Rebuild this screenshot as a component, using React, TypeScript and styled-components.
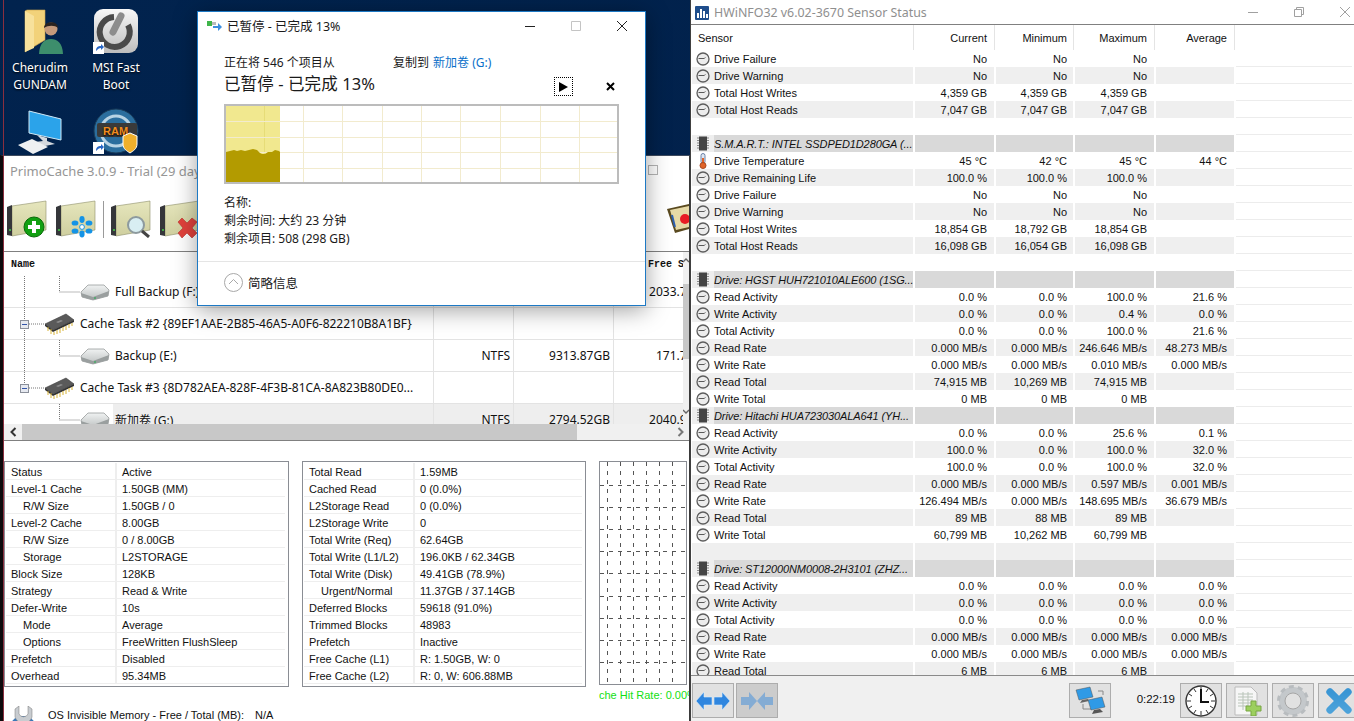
import React from "react";
import styled, { createGlobalStyle } from "styled-components";

const UI = `"Noto Sans", "Noto Sans CJK SC", sans-serif`;
const TAB = `"Liberation Sans", "Noto Sans CJK SC", sans-serif`;

const Global = createGlobalStyle`
  html, body { margin: 0; padding: 0; overflow: hidden; background: #02204a; }
  * { box-sizing: border-box; }
`;

const Desktop = styled.div`
  position: relative; width: 1354px; height: 721px; overflow: hidden;
  font-family: ${UI}; font-size: 11px; color: #111;
  background: linear-gradient(160deg, #01234e 0%, #02204a 60%, #041a3c 100%);
`;
const Seam = styled.div`
  position: absolute; left: 3px; top: 0; width: 1px; height: 721px; background: #8a2f3f; z-index: 5;
`;

/* ---------- desktop icons ---------- */
const IconGrid = styled.div`
  position: absolute; left: 2px; top: 8px;
  display: grid; grid-template-columns: 76px 76px; grid-auto-rows: 100px;
`;
const DeskIcon = styled.div`
  display: flex; flex-direction: column; align-items: center; text-align: center;
  color: #fff; font-size: 12px; line-height: 17px; text-shadow: 0 1px 2px #000;
  svg { display: block; margin-bottom: 5px; }
`;

/* ---------- primo window ---------- */
const Primo = styled.div`
  position: absolute; left: 0; top: 155px; width: 690px; height: 566px; overflow: hidden;
  background: #fff; border-left: 4px solid #0d0a0c; border-right: 1px solid #3a3a3a;
  border-top: 1px solid #3e4a5e; display: flex; flex-direction: column;
`;
const PrimoTitle = styled.div`
  height: 29px; flex: none; padding: 6px 0 0 6px; color: #969696; font-size: 13px; line-height: 18px;
  display: flex; align-items: flex-start; justify-content: space-between; white-space: nowrap;
`;
const GhostMax = styled.span`
  width: 10px; height: 10px; border: 1px solid #b5b5b5; margin: 3px 31px 0 0;
`;
const Toolbar = styled.div`
  height: 66px; flex: none; display: flex; align-items: flex-start; padding: 15px 0 0 3px; gap: 9px;
`;
const ToolSep = styled.span`
  width: 1px; height: 37px; background: #9a9a9a; margin: 1px -2px 0;
`;
const ToolEnd = styled.span`
  margin-left: auto; margin-top: 3px; display: flex;
`;
const List = styled.div`
  flex: none; height: 190px; border-top: 1px solid #808080; border-bottom: 1px solid #808080;
  display: grid; grid-template-columns: 679px 6px; grid-template-rows: 172px 16px;
`;
const ListBody = styled.div`
  overflow: hidden; grid-column: 1; grid-row: 1;
`;
const ListHead = styled.div`
  height: 24px; display: grid; grid-template-columns: 430px 80px 100px 100px; align-items: center; width: 710px; padding-top: 1px;
  font-family: "Liberation Mono", monospace; font-size: 10px; font-weight: 700; color: #111;
`;
const HeadName = styled.span` padding-left: 7px; `;
const HeadFree = styled.span` padding-left: 34px; grid-column: 4; `;
const ListRow = styled.div`
  height: 32px; width: 710px; display: grid; grid-template-columns: 430px 80px 100px 100px;
  border-bottom: 1px solid #e3e3e3; font-size: 12px;
`;
const NameCell = styled.div`
  display: flex; align-items: center; border-right: 1px solid #e3e3e3; white-space: nowrap; overflow: hidden;
  svg { flex: none; }
`;
const NameText = styled.span<{ $sel?: boolean; $gap?: number }>`
  margin-left: ${p => p.$gap ?? 0}px; align-self: stretch; flex: 1; display: flex; align-items: center;
  background: ${p => (p.$sel ? "#eeeeee" : "transparent")}; padding-left: ${p => (p.$sel ? 2 : 0)}px;
`;
const NumCell = styled.div<{ $sel?: boolean }>`
  display: flex; align-items: center; justify-content: flex-end; padding-right: 3px;
  border-right: 1px solid #e3e3e3; background: ${p => (p.$sel ? "#eeeeee" : "transparent")};
  white-space: nowrap;
`;
const VScroll = styled.div`
  background: #f0f0f0; display: flex; flex-direction: column; grid-column: 2; grid-row: 1; overflow: hidden;
  svg { display: block; flex: none; margin: 6px 0 10px; }
`;
const VThumb = styled.div` height: 75px; flex: none; margin-top: 11px; background: #c8c8c8; `;
const VGap = styled.div` flex: 1; `;
const HScroll = styled.div`
  grid-column: 1 / 3; grid-row: 2; background: #f0f0f0; display: flex; align-items: center; height: 16px;
`;
const HBtn = styled.span`
  width: 18px; height: 16px; display: flex; align-items: center; justify-content: center; flex: none;
`;
const HThumb = styled.div` width: 555px; height: 16px; background: #c8c8c8; `;
const HSpacer = styled.div` flex: 1; `;

const Stats = styled.div`
  display: flex; gap: 13px; padding-top: 20px; height: 246px; flex: none; white-space: nowrap;
`;
const StatBox = styled.div<{ $w: number; $label: number }>`
  width: ${p => p.$w}px; height: 226px; border: 1px solid #8a8d94; padding: 1px 3px 1px 1px; flex: none;
  display: grid; grid-template-columns: ${p => p.$label}px 1fr; grid-auto-rows: 17px;
  font-family: ${TAB}; font-size: 11px;
`;
const StatLabel = styled.div<{ $in?: boolean }>`
  padding-left: ${p => (p.$in ? 17 : 5)}px; border-right: 2px solid #eee; border-bottom: 1px solid #eee; line-height: 19px; overflow: hidden;
`;
const StatValue = styled.div`
  padding-left: 5px; border-bottom: 1px solid #eee; line-height: 19px; overflow: hidden;
`;
const GraphCol = styled.div`
  width: 120px; flex: none; display: flex; flex-direction: column;
`;
const Graph = styled.div`
  width: 88px; height: 224px; border: 1px solid #8a8d94; background: #fff; svg { display: block; }
`;
const HitRate = styled.div`
  color: #12e012; font-family: "Liberation Sans", sans-serif; font-size: 11px; line-height: 16px; margin-top: 2px;
`;
const MemRow = styled.div`
  display: flex; align-items: flex-start; font-family: ${TAB}; font-size: 11px; line-height: 18px; height: 34px;
  margin-top: 19px; padding-left: 1px; white-space: nowrap;
`;
const MemLabel = styled.span` margin-left: 7px; width: 207px; `;

/* ---------- copy dialog ---------- */
const CopyDialog = styled.div`
  position: absolute; left: 197px; top: 11px; width: 449px; height: 295px; background: #fff; z-index: 4;
  border: 1px solid #1d79c4; box-shadow: 0 4px 22px rgba(0,0,0,.38); display: flex; flex-direction: column;
  font-size: 12px; color: #1a1a1a;
`;
const DlgTitle = styled.div`
  height: 30px; flex: none; display: flex; align-items: center; padding: 0 0 3px 9px; font-size: 12.5px; gap: 5px;
`;
const DlgBtns = styled.div`
  margin-left: auto; display: flex; align-items: center; gap: 34px; padding-right: 17px;
  svg { display: block; }
`;
const DlgBody = styled.div`
  padding: 12px 26px 0 26px; flex: 1;
`;
const CopyLine = styled.div`
  display: flex; height: 18px; line-height: 18px; white-space: nowrap;
`;
const CopyFrom = styled.span` width: 169px; `;
const BlueText = styled.span` color: #0a6fc9; margin-left: 4px; `;
const BigLine = styled.div`
  display: flex; align-items: flex-start; height: 24px; font-size: 16.5px; line-height: 24px;
`;
const BigText = styled.span` flex: 1; letter-spacing: .1px; `;
const PlayBtn = styled.span`
  width: 19px; height: 19px; border: 1px dotted #000; display: flex; align-items: center; justify-content: center; margin: 5px 33px 0 0;
`;
const StopBtn = styled.span`
  display: flex; margin: 10px 4px 0 0;
`;
const Chart = styled.div`
  width: 395px; height: 80px; border: 2px solid #bcbcbc; margin-top: 8px; svg { display: block; }
`;
const InfoBlock = styled.div`
  margin-top: 10px; line-height: 18px;
`;
const DlgFooter = styled.div`
  height: 44px; flex: none; border-top: 1px solid #e5e5e5; display: flex; align-items: center; gap: 5px; padding: 0 0 3px 26px; font-size: 12.5px;
`;

/* ---------- hwinfo ---------- */
const Hw = styled.div`
  position: absolute; left: 690px; top: 0; width: 664px; height: 721px; background: #fff;
  border-left: 1px solid #404040; display: flex; flex-direction: column; z-index: 3; overflow: hidden;
  font-family: ${TAB};
`;
const HwTitle = styled.div`
  height: 25px; flex: none; border-bottom: 1px solid #808080; display: flex; align-items: center; padding: 1px 0 0 4px; gap: 5px;
  color: #8f8f8f; font-family: ${UI}; font-size: 12.4px; white-space: nowrap;
`;
const WinBtns = styled.div`
  margin-left: auto; display: flex; gap: 34px; align-items: center; padding-right: 3px; padding-bottom: 1px; svg { display: block; }
`;
const HwHead = styled.div`
  height: 25px; flex: none; padding-left: 1px; display: grid; grid-template-columns: 222px 81px 79px 81px 80px;
`;
const HeadCell = styled.div<{ $left?: boolean; $pad?: number }>`
  border-right: 1px solid #e4e4e4; display: flex; align-items: center; padding-top: 1px;
  justify-content: ${p => (p.$left ? "flex-start" : "flex-end")};
  padding-left: ${p => (p.$left ? 6 : 0)}px; padding-right: ${p => (p.$left ? 0 : p.$pad ?? 6)}px;
`;
const HwBody = styled.div`
  flex: 1; overflow: hidden; padding-left: 1px;
`;
const HwRow = styled.div`
  height: 17px; display: grid; grid-template-columns: 221px 79px 77px 79px 78px 116px; column-gap: 2px;
`;
const rowBg = { w: "#ffffff", g: "#efefef", h: "#d9d9d9" } as const;
type Tone = keyof typeof rowBg;
const SensorCell = styled.div<{ $tone: Tone }>`
  background: ${p => rowBg[p.$tone]}; display: flex; align-items: flex-start; white-space: nowrap; overflow: hidden; line-height: 19px;
  font-style: ${p => (p.$tone === "h" ? "italic" : "normal")};
  letter-spacing: ${p => (p.$tone === "h" ? "-.1px" : "0")};
`;
const IconSlot = styled.span<{ $head?: boolean }>`
  width: 22px; height: 17px; flex: none; display: flex; align-items: center; justify-content: center;
  background: ${p => (p.$head ? "#eeeeee" : "transparent")};
`;
const ValueCell = styled.div<{ $tone: Tone; $pad?: number }>`
  background: ${p => rowBg[p.$tone]}; text-align: right; padding-right: ${p => p.$pad ?? 6}px; line-height: 19px; white-space: nowrap; overflow: hidden;
`;
const SpareCell = styled.div`
  border-bottom: 1px solid #ececec;
`;
const HwFoot = styled.div`
  height: 46px; flex: none; border-top: 1px solid #8a8a8a; background: #f0f0f0; display: flex; padding: 7px 0 0 1px; gap: 2px; white-space: nowrap;
`;
const FootBtn = styled.div<{ $dim?: boolean }>`
  width: 42px; height: 35px; flex: none; border: 1px solid #adadad; background: ${p => (p.$dim ? "#cccccc" : "#e1e1e1")};
  display: flex; align-items: center; justify-content: center;
`;
const FootRight = styled.div`
  margin-left: auto; display: flex; gap: 4px; margin-right: -6px; align-items: flex-start;
`;
const Clock = styled.span`
  width: 61px; height: 35px; line-height: 33px; text-align: right; padding-right: 1px; font-size: 11.5px; flex: none;
`;

/* ---------- drawings ---------- */
const Gauge = () => (
  <svg width="14" height="14" viewBox="0 0 14 14">
    <circle cx="7" cy="7" r="6" fill="#ececec" stroke="#5c5c5c" strokeWidth="1.3" />
    <path d="M2.5 6.5h6" stroke="#5a5a5a" strokeWidth="1" />
    <path d="M8.5 6.5l1-1.5" stroke="#888" strokeWidth="1" />
  </svg>
);
const Thermo = () => (
  <svg width="10" height="16" viewBox="0 0 10 16">
    <rect x="3" y="0.5" width="4" height="10" rx="2" fill="#dfe7f2" stroke="#6a7fa5" />
    <rect x="4" y="5" width="2" height="7" fill="#e0642a" />
    <circle cx="5" cy="12.5" r="3" fill="#e0642a" stroke="#a8481e" />
  </svg>
);
const SmallChip = () => (
  <svg width="12" height="15" viewBox="0 0 12 15">
    <rect x="2" y="0.5" width="8" height="14" fill="#444" />
    <path d="M0 2h12M0 4.5h12M0 7h12M0 9.5h12M0 12h12" stroke="#8a8a8a" strokeWidth="1" strokeDasharray="2 8" />
  </svg>
);
const TreeDrive = () => (
  <svg width="76" height="31" viewBox="0 0 76 31">
    <path d="M20.5 0V31" stroke="#777" strokeDasharray="1 1" fill="none" />
    <path d="M55.5 0V16H76" stroke="#777" strokeDasharray="1 1" fill="none" />
  </svg>
);
const TreeTask = ({ last }: { last?: boolean }) => (
  <svg width="40" height="31" viewBox="0 0 40 31">
    <path d={last ? "M20.5 0V12" : "M20.5 0V31"} stroke="#777" strokeDasharray="1 1" fill="none" />
    <path d="M25 16H40" stroke="#777" strokeDasharray="1 1" fill="none" />
    <rect x="16.5" y="12.5" width="8" height="8" fill="#e6e9f0" stroke="#8a8f9a" />
    <path d="M18 16.5h5" stroke="#3355aa" strokeWidth="1" />
  </svg>
);
const DriveGlyph = () => (
  <svg width="30" height="18" viewBox="0 0 30 18">
    <defs><linearGradient id="dg" x1="0" y1="0" x2="0" y2="1"><stop offset="0" stopColor="#f0f2f2" /><stop offset="1" stopColor="#bcc0c0" /></linearGradient></defs>
    <path d="M1 9 L8 2 H24 L29 7 L28 13 L13 17 L2 14Z" fill="url(#dg)" stroke="#8b8f8f" strokeWidth=".7" />
    <path d="M1 10 L13 14 L29 8 L28 13 L13 17 L2 14Z" fill="#9a9f9f" />
    <circle cx="15" cy="15" r="1" fill="#4a6" />
  </svg>
);
const ChipGlyph = () => (
  <svg width="30" height="22" viewBox="0 0 30 22">
    <path d="M1 11 L22 1 L30 7 L9 17Z" fill="#5a5a5a" stroke="#3c3c3c" strokeWidth=".6" />
    <path d="M1 11 L9 17 L9 19 L1 13Z M9 17 L30 7 L30 9 L9 19Z" fill="#333" />
    <path d="M12 9 L17 7 L19 8 L14 10Z" fill="#8c8c8c" />
    <path d="M4 14v4M7 16v5M10 19v3M13 17v4M16 16v4M19 14v4M22 13v4M25 11v4M28 10v3" stroke="#d9b437" strokeWidth="1" />
  </svg>
);
const ToolDrive = ({ children }: { children?: React.ReactNode }) => (
  <svg width="40" height="38" viewBox="0 0 40 38">
    <defs><linearGradient id="tdf" x1="0" y1="0" x2="0" y2="1"><stop offset="0" stopColor="#e6e6bd" /><stop offset="1" stopColor="#cfcf9f" /></linearGradient></defs>
    <path d="M5 6 L39 1 V30 L5 36Z" fill="url(#tdf)" stroke="#8d8e6a" strokeWidth=".6" />
    <path d="M0 7 L5 5 V36 L0 35Z" fill="#35363a" />
    <circle cx="3" cy="30" r="1" fill="#45d04a" />
    {children}
  </svg>
);
const PlusBadge = () => (
  <g>
    <circle cx="27" cy="27" r="10" fill="#12a012" stroke="#0a6a0a" />
    <path d="M27 21v12M21 27h12" stroke="#fff" strokeWidth="4" />
  </g>
);
const FlakeBadge = () => (
  <g fill="#1493e6">
    <circle cx="26" cy="27" r="2.4" fill="#fff" stroke="#1493e6" />
    <ellipse cx="26" cy="19.5" rx="2.6" ry="3.4" />
    <ellipse cx="26" cy="34" rx="2.6" ry="3.4" />
    <ellipse cx="19" cy="23" rx="3.4" ry="2.6" />
    <ellipse cx="33" cy="23" rx="3.4" ry="2.6" />
    <ellipse cx="19" cy="31" rx="3.4" ry="2.6" />
    <ellipse cx="33" cy="31" rx="3.4" ry="2.6" />
  </g>
);
const LensBadge = () => (
  <g>
    <circle cx="25" cy="25" r="8" fill="#d8eef2" stroke="#8d9a9e" strokeWidth="2" />
    <path d="M31 31l7 6" stroke="#444" strokeWidth="3" />
  </g>
);
const CrossBadge = () => (
  <path d="M18 22l4-4 5 5 5-5 5 4-5 6 5 5-5 5-5-5-5 5-4-5 5-5z" fill="#e2423c" stroke="#b8302c" strokeWidth=".6" />
);
const BookGlyph = () => (
  <svg width="22" height="30" viewBox="0 0 22 30">
    <path d="M0 6 L22 1 V26 L8 30Z" fill="#5a4a20" />
    <path d="M3 7 L22 3 V24 L9 27Z" fill="#e6d9a6" />
    <circle cx="18" cy="16" r="5" fill="#e81c24" />
    <path d="M5 12l3 12" stroke="#2c5fb0" strokeWidth="2" />
  </svg>
);
const FolderUser = () => (
  <svg width="46" height="46" viewBox="0 0 46 46">
    <path d="M8 3 L10 2 H28 V32 L8 44Z" fill="#f2d27a" stroke="#c9a24c" strokeWidth=".6" />
    <path d="M8 3 L17 8 V40 L8 44Z" fill="#f7e19c" />
    <circle cx="34" cy="21" r="6.5" fill="#c59a7c" />
    <path d="M27 20c0-7 14-8 14 0-3-3-10-3-14 0z" fill="#2a2320" />
    <path d="M22 47c0-12 6-16 12-16s12 4 12 16z" fill="#3d8e6c" />
  </svg>
);
const PowerTile = () => (
  <svg width="46" height="46" viewBox="0 0 46 46">
    <defs><linearGradient id="pt" x1="0" y1="0" x2="0" y2="1"><stop offset="0" stopColor="#f8f8f8" /><stop offset="1" stopColor="#bdbdbd" /></linearGradient></defs>
    <rect x="1" y="1" width="44" height="44" rx="9" fill="url(#pt)" />
    <path d="M21 9a15 15 0 1 0 14 8" fill="none" stroke="#4a4a4a" strokeWidth="6" />
    <path d="M28 8L20 24" stroke="#8d8d8d" strokeWidth="7" strokeLinecap="round" />
    <rect x="0" y="34" width="11" height="12" fill="#fff" />
    <path d="M3 43c0-4 2-5 5-5v-2l3 3-3 3v-2c-2 0-3 1-5 3z" fill="#2867c7" />
  </svg>
);
const MonitorIcon = () => (
  <svg width="46" height="46" viewBox="0 0 46 46">
    <path d="M12 3 L44 11 V32 L12 25Z" fill="#2ba3ea" stroke="#cfe9f7" />
    <path d="M20 27 L30 30 V33 L38 36 L28 38 L18 34 L26 33Z" fill="#d5d9de" />
    <path d="M1 37 L15 31 L31 39 L16 46Z" fill="#eef0f2" />
  </svg>
);
const RamIcon = () => (
  <svg width="46" height="46" viewBox="0 0 46 46">
    <circle cx="23" cy="23" r="22" fill="#2b6e9e" stroke="#1a3b58" />
    <circle cx="23" cy="23" r="15" fill="none" stroke="#b8d3e4" strokeWidth="3" />
    <rect x="4" y="15" width="40" height="14" rx="2" fill="#3a3a3a" />
    <text x="10" y="27" fontSize="11" fontWeight="700" fill="#f08c1e" fontFamily="Liberation Sans, sans-serif">RAM</text>
    <path d="M30 28l7-3 7 3v8c0 5-4 7-7 9-3-2-7-4-7-9z" fill="#f0b02c" stroke="#fff" />
    <rect x="0" y="34" width="11" height="12" fill="#fff" />
    <path d="M3 43c0-4 2-5 5-5v-2l3 3-3 3v-2c-2 0-3 1-5 3z" fill="#2867c7" />
  </svg>
);
const CopyGlyph = () => (
  <svg width="15" height="12" viewBox="0 0 15 12">
    <rect x="0" y="1" width="5" height="5" fill="#3fb54a" />
    <rect x="5" y="2" width="4" height="3" fill="#bbb" />
    <path d="M6 6h5V3l4 4-4 4V8H6z" fill="#3d8fe0" />
  </svg>
);
const Thin = ({ d, color }: { d: string; color: string }) => (
  <svg width="12" height="12" viewBox="0 0 12 12"><path d={d} stroke={color} strokeWidth="1" fill="none" /></svg>
);
const ArrowsOut = ({ dim }: { dim?: boolean }) => (
  <svg width="34" height="20" viewBox="0 0 34 20" opacity={dim ? .45 : 1}>
    {dim ? (
      <g fill="#2f86df"><path d="M1 6h8V1l8 9-8 9v-5H1z" /><path d="M33 6h-8V1l-8 9 8 9v-5h8z" /></g>
    ) : (
      <g fill="#2f86df" stroke="#d8ecfb" strokeWidth=".6"><path d="M16 6H8V1L0 10l8 9v-5h8z" /><path d="M18 6h8V1l8 9-8 9v-5h-8z" /></g>
    )}
  </svg>
);
const NetGlyph = () => (
  <svg width="32" height="30" viewBox="0 0 32 30">
    <path d="M9 18v5h9M24 5h5v4" stroke="#888" fill="none" />
    <path d="M2 4l14-3 3 10-14 3z" fill="#2f9ae6" stroke="#555" strokeWidth=".5" />
    <path d="M8 14l-2 3 9-2-1-2z" fill="#666" />
    <path d="M14 14l14-3 3 10-14 3z" fill="#2f9ae6" stroke="#555" strokeWidth=".5" />
    <path d="M20 24l-2 4 11-2-3-3z" fill="#555" />
  </svg>
);
const ClockGlyph = () => (
  <svg width="32" height="32" viewBox="0 0 32 32">
    <circle cx="16" cy="16" r="15" fill="#fff" stroke="#333" strokeWidth="1.4" />
    <path d="M16 2v4M16 26v4M2 16h4M26 16h4M9 4l2 3M23 4l-2 3M9 28l2-3M23 28l-2-3M4 9l3 2M28 9l-3 2M4 23l3-2M28 23l-3-2" stroke="#333" />
    <path d="M16 4v13h8" stroke="#111" strokeWidth="2" fill="none" />
  </svg>
);
const SheetGlyph = () => (
  <svg width="30" height="30" viewBox="0 0 30 30">
    <path d="M3 1h16l6 6v22H3z" fill="#f6f6f6" stroke="#bbb" />
    <path d="M6 8h15M6 11h15M6 14h15M6 17h15M6 20h10M11 6v18M16 6v14" stroke="#b9c4b9" />
    <path d="M19 15h5v5h5v5h-5v5h-5v-5h-5v-5h5z" fill="#9ccf5e" stroke="#78a642" />
  </svg>
);
const GearGlyph = () => (
  <svg width="32" height="32" viewBox="0 0 32 32">
    <circle cx="16" cy="16" r="11" fill="none" stroke="#c4c8cb" strokeWidth="6" />
    <circle cx="16" cy="16" r="14.5" fill="none" stroke="#b8bcbf" strokeWidth="3" strokeDasharray="5 4.1" />
    <circle cx="16" cy="16" r="8" fill="#e1e1e1" stroke="#a5a5a5" />
  </svg>
);
const CloseGlyph = () => (
  <svg width="26" height="26" viewBox="0 0 26 26">
    <defs><linearGradient id="cx" x1="0" y1="0" x2="0" y2="1"><stop offset="0" stopColor="#2f8ed2" /><stop offset="1" stopColor="#6cb6e4" /></linearGradient></defs>
    <path d="M4 4l18 18M22 4L4 22" stroke="url(#cx)" strokeWidth="7" strokeLinecap="round" />
    <path d="M4 4l18 18M22 4L4 22" stroke="#3f9ad6" strokeWidth="7" strokeLinecap="round" opacity=".7" />
  </svg>
);
const ChevronCircle = () => (
  <svg width="19" height="19" viewBox="0 0 19 19">
    <circle cx="9.5" cy="9.5" r="9" fill="#fff" stroke="#a8a8a8" />
    <path d="M5 11l4.5-4.5L14 11" fill="none" stroke="#a8a8a8" />
  </svg>
);
const WrenchGlyph = () => (
  <svg width="36" height="30" viewBox="0 0 36 30">
    <circle cx="18" cy="24" r="14" fill="#3b78b8" />
    <path d="M14 0v8a5 5 0 0 0 9 0V0l4 3v8a9 9 0 0 1-17 0V3z" fill="#c8ccd0" stroke="#777" strokeWidth=".5" />
  </svg>
);

const CopyChart = () => {
  const vx = [38, 77, 116, 156, 195, 234, 274, 314, 353];
  const hy = [15, 31, 46, 62];
  const top = "0,46 4,45 8,44 11,45 15,44 19,45 23,44 27,43 31,44 34,47 36,48 39,48 42,46 46,46 49,44 53,45 54,46 54,76 0,76";
  return (
    <svg width="391" height="76" viewBox="0 0 391 76">
      <rect width="54" height="76" x="0" fill="#f1e88f" />
      {vx.map(x => <path key={x} d={`M${x + .5} 0V76`} stroke={x < 54 ? "#e6dc78" : "#f2ebce"} />)}
      {hy.map(y => <path key={y} d={`M0 ${y + .5}H391`} stroke="#f2ebce" />)}
      <polygon points={top} fill="#b39b00" />
    </svg>
  );
};
const HitGraph = () => {
  const vx = [7, 20, 33, 46, 59, 72];
  const hy = [23, 45, 67, 89, 111, 134, 156, 178, 200];
  return (
    <svg width="86" height="222" viewBox="0 0 86 222">
      {vx.map(x => <path key={x} d={`M${x + .5} 0V222`} stroke="#555" strokeDasharray="4 5" />)}
      {hy.map(y => <path key={y} d={`M0 ${y + .5}H86`} stroke="#555" strokeDasharray="4 5" />)}
    </svg>
  );
};

/* ---------- data ---------- */
const leftStats: [string, string, boolean?][] = [
  ["Status", "Active"], ["Level-1 Cache", "1.50GB (MM)"], ["R/W Size", "1.50GB / 0", true],
  ["Level-2 Cache", "8.00GB"], ["R/W Size", "0 / 8.00GB", true], ["Storage", "L2STORAGE", true],
  ["Block Size", "128KB"], ["Strategy", "Read & Write"], ["Defer-Write", "10s"],
  ["Mode", "Average", true], ["Options", "FreeWritten FlushSleep", true], ["Prefetch", "Disabled"], ["Overhead", "95.34MB"],
];
const rightStats: [string, string, boolean?][] = [
  ["Total Read", "1.59MB"], ["Cached Read", "0 (0.0%)"], ["L2Storage Read", "0 (0.0%)"], ["L2Storage Write", "0"],
  ["Total Write (Req)", "62.64GB"], ["Total Write (L1/L2)", "196.0KB / 62.34GB"], ["Total Write (Disk)", "49.41GB (78.9%)"],
  ["Urgent/Normal", "11.37GB / 37.14GB", true], ["Deferred Blocks", "59618 (91.0%)"], ["Trimmed Blocks", "48983"],
  ["Prefetch", "Inactive"], ["Free Cache (L1)", "R: 1.50GB, W: 0"], ["Free Cache (L2)", "R: 0, W: 606.88MB"],
];

type Row = { k: "blank" } | { k: "head"; name: string } | { k: "row"; name: string; v: string[]; icon?: "t" };
const r = (name: string, ...v: string[]): Row => ({ k: "row", name, v });
const same = (name: string, val: string) => r(name, val, val, val, "");
const b: Row = { k: "blank" };
const h = (name: string): Row => ({ k: "head", name });
const mb = (a: string, bb: string, c: string, d: string) => [a, bb, c, d].map(x => (x ? `${x} MB/s` : ""));
const pc = (a: string, bb: string, c: string, d: string) => [a, bb, c, d].map(x => (x ? `${x} %` : ""));
const hwRows: Row[] = [
  same("Drive Failure", "No"), same("Drive Warning", "No"), same("Total Host Writes", "4,359 GB"), same("Total Host Reads", "7,047 GB"), b,
  h("S.M.A.R.T.: INTEL SSDPED1D280GA (..."),
  { k: "row", name: "Drive Temperature", v: ["45 °C", "42 °C", "45 °C", "44 °C"], icon: "t" },
  same("Drive Remaining Life", "100.0 %"), same("Drive Failure", "No"), same("Drive Warning", "No"),
  r("Total Host Writes", "18,854 GB", "18,792 GB", "18,854 GB", ""), r("Total Host Reads", "16,098 GB", "16,054 GB", "16,098 GB", ""), b,
  h("Drive: HGST HUH721010ALE600 (1SG..."),
  r("Read Activity", ...pc("0.0", "0.0", "100.0", "21.6")), r("Write Activity", ...pc("0.0", "0.0", "0.4", "0.0")), r("Total Activity", ...pc("0.0", "0.0", "100.0", "21.6")),
  r("Read Rate", ...mb("0.000", "0.000", "246.646", "48.273")), r("Write Rate", ...mb("0.000", "0.000", "0.010", "0.000")),
  r("Read Total", "74,915 MB", "10,269 MB", "74,915 MB", ""), r("Write Total", "0 MB", "0 MB", "0 MB", ""),
  h("Drive: Hitachi HUA723030ALA641 (YH..."),
  r("Read Activity", ...pc("0.0", "0.0", "25.6", "0.1")), r("Write Activity", ...pc("100.0", "0.0", "100.0", "32.0")), r("Total Activity", ...pc("100.0", "0.0", "100.0", "32.0")),
  r("Read Rate", ...mb("0.000", "0.000", "0.597", "0.001")), r("Write Rate", ...mb("126.494", "0.000", "148.695", "36.679")),
  r("Read Total", "89 MB", "88 MB", "89 MB", ""), r("Write Total", "60,799 MB", "10,262 MB", "60,799 MB", ""), b,
  h("Drive: ST12000NM0008-2H3101 (ZHZ..."),
  r("Read Activity", ...pc("0.0", "0.0", "0.0", "0.0")), r("Write Activity", ...pc("0.0", "0.0", "0.0", "0.0")), r("Total Activity", ...pc("0.0", "0.0", "0.0", "0.0")),
  r("Read Rate", ...mb("0.000", "0.000", "0.000", "0.000")), r("Write Rate", ...mb("0.000", "0.000", "0.000", "0.000")),
  r("Read Total", "6 MB", "6 MB", "6 MB", ""),
];
const valuePads = [7, 6, 7, 7];

const HwTable = () => {
  let n = 0;
  return (
    <HwBody>
      {hwRows.map((row, i) => {
        if (row.k === "head") {
          n = 0;
          return (
            <HwRow key={i}>
              <SensorCell $tone="h"><IconSlot $head><SmallChip /></IconSlot>{row.name}</SensorCell>
              <ValueCell $tone="h" /><ValueCell $tone="h" /><ValueCell $tone="h" /><ValueCell $tone="h" /><SpareCell />
            </HwRow>
          );
        }
        const tone: Tone = n++ % 2 ? "g" : "w";
        if (row.k === "blank") {
          return (
            <HwRow key={i}>
              <SensorCell $tone={tone} /><ValueCell $tone={tone} /><ValueCell $tone={tone} /><ValueCell $tone={tone} /><ValueCell $tone={tone} /><SpareCell />
            </HwRow>
          );
        }
        return (
          <HwRow key={i}>
            <SensorCell $tone={tone}><IconSlot>{row.icon ? <Thermo /> : <Gauge />}</IconSlot>{row.name}</SensorCell>
            {row.v.map((x, j) => <ValueCell key={j} $tone={tone} $pad={valuePads[j]}>{x}</ValueCell>)}
            <SpareCell />
          </HwRow>
        );
      })}
    </HwBody>
  );
};

const Stat = ({ rows, w, label }: { rows: [string, string, boolean?][]; w: number; label: number }) => (
  <StatBox $w={w} $label={label}>
    {rows.map(([a, v, ind], i) => (
      <React.Fragment key={i}>
        <StatLabel $in={ind}>{a}</StatLabel>
        <StatValue>{v}</StatValue>
      </React.Fragment>
    ))}
  </StatBox>
);

export default function App() {
  return (
    <Desktop>
      <Global />
      <IconGrid>
        <DeskIcon><FolderUser />Cherudim<br />GUNDAM</DeskIcon>
        <DeskIcon><PowerTile />MSI Fast<br />Boot</DeskIcon>
        <DeskIcon><MonitorIcon /></DeskIcon>
        <DeskIcon><RamIcon /></DeskIcon>
      </IconGrid>

      <Primo>
        <PrimoTitle>PrimoCache 3.0.9 - Trial (29 days left)<GhostMax /></PrimoTitle>
        <Toolbar>
          <ToolDrive><PlusBadge /></ToolDrive>
          <ToolDrive><FlakeBadge /></ToolDrive>
          <ToolSep />
          <ToolDrive><LensBadge /></ToolDrive>
          <ToolDrive><CrossBadge /></ToolDrive>
          <ToolEnd><BookGlyph /></ToolEnd>
        </Toolbar>
        <List>
          <ListBody>
            <ListHead><HeadName>Name</HeadName><HeadFree>Free S</HeadFree></ListHead>
            <ListRow>
              <NameCell><TreeDrive /><DriveGlyph /><NameText $gap={5}>Full Backup (F:)</NameText></NameCell>
              <NumCell>NTFS</NumCell><NumCell>9313.87GB</NumCell><NumCell>2033.78GB</NumCell>
            </ListRow>
            <ListRow>
              <NameCell><TreeTask /><ChipGlyph /><NameText $gap={6}>Cache Task #2 {"{89EF1AAE-2B85-46A5-A0F6-822210B8A1BF}"}</NameText></NameCell>
              <NumCell /><NumCell /><NumCell />
            </ListRow>
            <ListRow>
              <NameCell><TreeDrive /><DriveGlyph /><NameText $gap={5}>Backup (E:)</NameText></NameCell>
              <NumCell>NTFS</NumCell><NumCell>9313.87GB</NumCell><NumCell>171.75GB</NumCell>
            </ListRow>
            <ListRow>
              <NameCell><TreeTask last /><ChipGlyph /><NameText $gap={6}>Cache Task #3 {"{8D782AEA-828F-4F3B-81CA-8A823B80DE0..."}</NameText></NameCell>
              <NumCell /><NumCell /><NumCell />
            </ListRow>
            <ListRow>
              <NameCell><svg width="76" height="31" viewBox="0 0 76 31"><path d="M55.5 0V16H76" stroke="#777" strokeDasharray="1 1" fill="none" /></svg><DriveGlyph /><NameText $sel $gap={3}>新加卷 (G:)</NameText></NameCell>
              <NumCell $sel>NTFS</NumCell><NumCell $sel>2794.52GB</NumCell><NumCell $sel>2040.95GB</NumCell>
            </ListRow>
          </ListBody>
          <VScroll>
            <svg width="6" height="5" viewBox="0 0 6 5"><path d="M0 4l3-3 3 3" fill="none" stroke="#666" strokeWidth="1.4" /></svg>
            <VThumb />
            <VGap />
            <svg width="6" height="5" viewBox="0 0 6 5"><path d="M0 1l3 3 3-3" fill="none" stroke="#666" strokeWidth="1.4" /></svg>
          </VScroll>
          <HScroll>
            <HBtn><svg width="7" height="10" viewBox="0 0 7 10"><path d="M5.5 1L1.5 5l4 4" fill="none" stroke="#333" strokeWidth="2" /></svg></HBtn>
            <HThumb />
            <HSpacer />
            <HBtn><svg width="7" height="10" viewBox="0 0 7 10"><path d="M1.5 1l4 4-4 4" fill="none" stroke="#777" strokeWidth="2" /></svg></HBtn>
          </HScroll>
        </List>
        <Stats>
          <Stat rows={leftStats} w={285} label={111} />
          <Stat rows={rightStats} w={284} label={111} />
          <GraphCol>
            <Graph><HitGraph /></Graph>
            <HitRate>che Hit Rate: 0.00%</HitRate>
          </GraphCol>
        </Stats>
        <MemRow><WrenchGlyph /><MemLabel>OS Invisible Memory - Free / Total (MB):</MemLabel>N/A</MemRow>
      </Primo>

      <CopyDialog>
        <DlgTitle>
          <CopyGlyph />已暂停 - 已完成 13%
          <DlgBtns>
            <Thin d="M1 6.5h10" color="#222" />
            <Thin d="M1.5 1.5h9v9h-9z" color="#c4c4c4" />
            <Thin d="M1 1l10 10M11 1L1 11" color="#222" />
          </DlgBtns>
        </DlgTitle>
        <DlgBody>
          <CopyLine><CopyFrom>正在将 546 个项目从</CopyFrom>复制到<BlueText>新加卷 (G:)</BlueText></CopyLine>
          <BigLine>
            <BigText>已暂停 - 已完成 13%</BigText>
            <PlayBtn><svg width="11" height="10" viewBox="0 0 11 10"><path d="M1 0l9 5-9 5z" fill="#000" /></svg></PlayBtn>
            <StopBtn><svg width="9" height="9" viewBox="0 0 9 9"><path d="M1 1l7 7M8 1L1 8" stroke="#000" strokeWidth="2" /></svg></StopBtn>
          </BigLine>
          <Chart><CopyChart /></Chart>
          <InfoBlock>
            <div>名称:</div>
            <div>剩余时间: 大约 23 分钟</div>
            <div>剩余项目: 508 (298 GB)</div>
          </InfoBlock>
        </DlgBody>
        <DlgFooter><ChevronCircle />简略信息</DlgFooter>
      </CopyDialog>

      <Hw>
        <HwTitle>
          <svg width="14" height="14" viewBox="0 0 14 14">
            <rect width="14" height="14" rx="1" fill="#1f4e8c" />
            <path d="M3 12V7M6 12V3M9 12V5M12 12V8" stroke="#fff" strokeWidth="2" />
          </svg>
          HWiNFO32 v6.02-3670 Sensor Status
          <WinBtns>
            <Thin d="M1 6.5h10" color="#a0a0a0" />
            <Thin d="M1.5 3.5h7v7h-7zM3.5 3.5v-2h7v7h-2" color="#a0a0a0" />
            <Thin d="M1 1l10 10M11 1L1 11" color="#a0a0a0" />
          </WinBtns>
        </HwTitle>
        <HwHead>
          <HeadCell $left>Sensor</HeadCell>
          <HeadCell $pad={7}>Current</HeadCell>
          <HeadCell>Minimum</HeadCell>
          <HeadCell $pad={7}>Maximum</HeadCell>
          <HeadCell $pad={7}>Average</HeadCell>
        </HwHead>
        <HwTable />
        <HwFoot>
          <FootBtn><ArrowsOut /></FootBtn>
          <FootBtn $dim><ArrowsOut dim /></FootBtn>
          <FootRight>
            <FootBtn><NetGlyph /></FootBtn>
            <Clock>0:22:19</Clock>
            <FootBtn><ClockGlyph /></FootBtn>
            <FootBtn><SheetGlyph /></FootBtn>
            <FootBtn><GearGlyph /></FootBtn>
            <FootBtn><CloseGlyph /></FootBtn>
          </FootRight>
        </HwFoot>
      </Hw>
      <Seam />
    </Desktop>
  );
}
